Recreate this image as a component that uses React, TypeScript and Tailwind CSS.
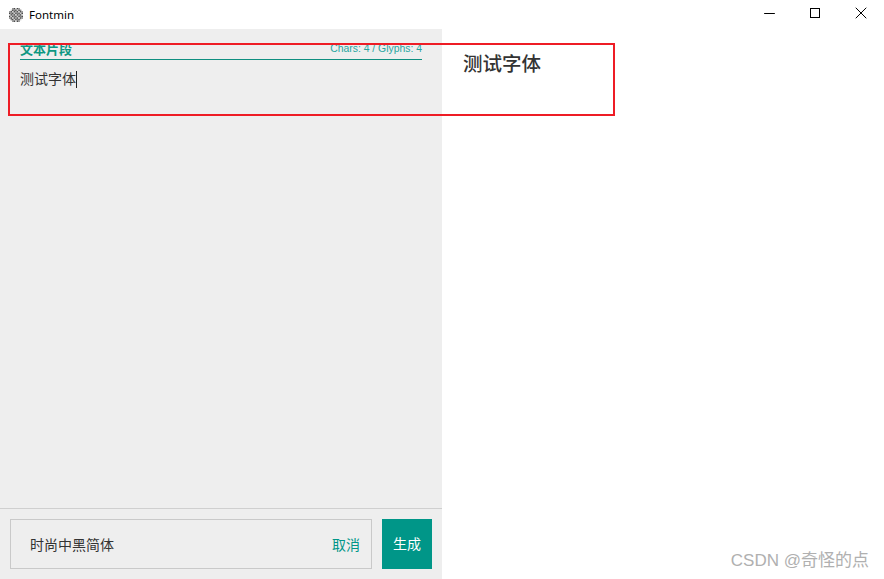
import { Minus, X } from "lucide-react"

const cjk = "font-['Liberation_Sans','Noto_Sans_CJK_SC',sans-serif]"

function AppIcon() {
  const dots: [number, number][] = []
  for (let y = 0; y < 9; y++) {
    for (let x = 0; x < 9; x++) {
      const dx = x - 4
      const dy = y - 4
      if (dx * dx + dy * dy <= 20) dots.push([x, y])
    }
  }
  return (
    <svg width="14" height="14" viewBox="0 0 14 14" className="shrink-0">
      {dots.map(([x, y]) => (
        <rect
          key={`${x}-${y}`}
          x={x * 1.55}
          y={y * 1.55}
          width="1.55"
          height="1.55"
          fill={(x * 5 + y * 3) % 4 === 0 ? "#d0d0d0" : (x + y) % 2 ? "#444" : "#8a8a8a"}
        />
      ))}
    </svg>
  )
}

function TitleBar() {
  return (
    <div className="flex h-[29px] shrink-0 items-center bg-white">
      <div className="ml-[9px] flex items-center gap-[6px]">
        <AppIcon />
        <span className="font-['Noto_Sans',sans-serif] text-[11.5px] text-black">
          Fontmin
        </span>
      </div>
      <div className="mt-[-3px] ml-auto flex items-center">
        <button className="flex h-[26px] w-[46px] items-center justify-center">
          <Minus size={17} strokeWidth={1} absoluteStrokeWidth className="text-black" />
        </button>
        <button className="flex h-[26px] w-[46px] items-center justify-center">
          <span className="h-[10px] w-[10px] border border-black" />
        </button>
        <button className="flex h-[26px] w-[46px] items-center justify-center">
          <X size={20} strokeWidth={1} absoluteStrokeWidth className="text-black" />
        </button>
      </div>
    </div>
  )
}

function Editor() {
  return (
    <div className="flex-1 px-5 pt-[13px]">
      <div className="flex h-[18px] items-start justify-between border-b border-[#0f8f80]">
        <span className="text-[13px] leading-[16px] font-bold text-[#0f9882]">文本片段</span>
        <span className="pt-[1px] text-[10.4px] leading-[12px] text-[#27a5a0]">
          Chars: 4 / Glyphs: 4
        </span>
      </div>
      <div className="mt-[9px] flex items-center text-[14px] leading-[20px] text-[#333]">
        测试字体
        <span className="h-[17px] w-px bg-[#222]" />
      </div>
    </div>
  )
}

function Footer() {
  return (
    <div className="flex h-[71px] shrink-0 gap-[10px] border-t border-[#cfcfcf] px-[10px] pt-[10px]">
      <div className="flex h-[50px] flex-1 items-center justify-between border border-[#c9c9c9] pr-[11px] pl-[19px]">
        <span className="pt-[2px] text-[14px] text-[#333]">时尚中黑简体</span>
        <button className="pt-[2px] text-[14px] text-[#009688]">取消</button>
      </div>
      <button className="h-[50px] w-[50px] bg-[#009688] text-[14px] text-white">生成</button>
    </div>
  )
}

export default function App() {
  return (
    <div className={`relative flex h-[579px] w-[884px] flex-col overflow-hidden bg-white ${cjk}`}>
      <TitleBar />
      <div className="flex min-h-0 flex-1">
        <div className="flex w-[442px] flex-col bg-[#eeeeee]">
          <Editor />
          <Footer />
        </div>
        <div className="flex-1 pt-[21px] pl-[21px]">
          <div className="text-[19.5px] leading-[28px] font-medium text-[#333]">测试字体</div>
        </div>
      </div>
      <div className="pointer-events-none absolute top-[43px] left-[8px] h-[73px] w-[607px] border-2 border-[#ee1c25]" />
      <div className="absolute top-[550px] right-[15px] text-[17px] leading-[22px] text-[#b0b0b0]">
        CSDN @奇怪的点
      </div>
    </div>
  )
}
